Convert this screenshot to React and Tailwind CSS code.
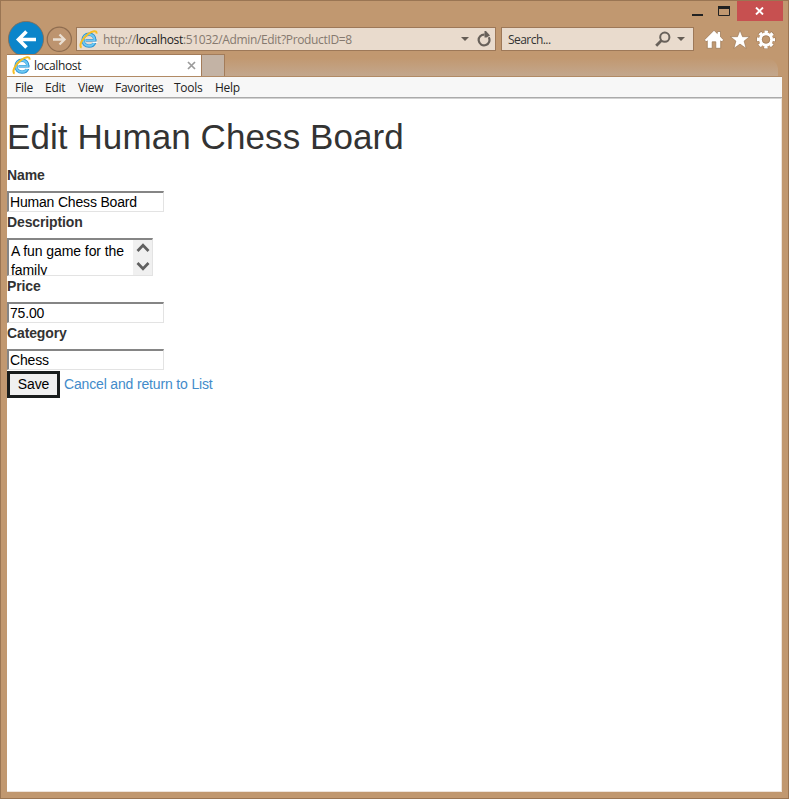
import React from "react";

const ui = "font-['Open_Sans','Noto_Sans',sans-serif]";

function BrowserLogo() {
  return (
    <svg width="19" height="19" viewBox="0 0 19 19" className="shrink-0" fill="none">
      <path d="M15.700 12.300C14.800 14.800 12.600 16.100 10 16.100C6.400 16.100 4 13.700 4 10.200C4 6.700 6.500 4.200 10 4.200C13.600 4.200 16 6.700 15.800 10.500" stroke="#2f93d2" strokeWidth="3.400" />
      <path d="M6.500 10.400H17.400" stroke="#2f93d2" strokeWidth="2.400" />
      <path d="M15.300 12.300C14.400 14.500 12.500 15.800 10 15.800C6.600 15.800 4.200 13.500 4.200 10.200C4.200 6.900 6.600 4.500 10 4.500C13.300 4.500 15.600 6.800 15.500 10.300" stroke="#6cc9f4" strokeWidth="2.100" />
      <path d="M6 10.400H16.400" stroke="#6cc9f4" strokeWidth="1.200" />
      <path d="M13.500 12.400H18.500" stroke="#fff" strokeWidth="1" />
      <path d="M2.600 17.600C-.6 16.100 3.200 8.300 8.800 4.200C13.200 1 18-.4 17.500 3.700" stroke="#f6bd22" strokeWidth="2" />
    </svg>
  );
}

function Caret() {
  return (
    <svg width="8" height="4" viewBox="0 0 8 4" className="shrink-0">
      <path d="M0 0h8L4 4z" fill="#655d55" />
    </svg>
  );
}

function TitleBar() {
  return (
    <div className="flex h-5 shrink-0 justify-end pr-[5px]">
      <svg width="40" height="20" viewBox="0 0 40 20" className="mr-[5px]">
        <path d="M0 13h11v2H0z" fill="#222" />
        <path d="M26.500 5.500h11v9h-11z" fill="none" stroke="#222" />
        <path d="M26 5h12v3H26z" fill="#222" />
      </svg>
      <div className="flex w-[46px] items-center justify-center bg-[#c75050]">
        <svg width="9" height="8" viewBox="0 0 9 8" className="mr-px">
          <path d="M1 .5l7 7M8 .5l-7 7" stroke="#fff" strokeWidth="1.900" />
        </svg>
      </div>
    </div>
  );
}

function NavBar() {
  return (
    <div className="flex h-[33px] shrink-0 items-start pl-[7px]">
      <svg width="37" height="37" viewBox="0 0 37 37" className="shrink-0">
        <circle cx="18" cy="18" r="17.600" fill="#0b85ca" stroke="#896b50" strokeWidth=".8" />
        <path d="M28 18.500H11M18.500 10.500l-8 8 8 8" fill="none" stroke="#fff" strokeWidth="3.600" />
      </svg>
      <svg width="26" height="26" viewBox="0 0 26 26" className="ml-px mt-[5px] shrink-0">
        <circle cx="13.300" cy="13.300" r="12.100" fill="#bd946f" stroke="#8f6d50" strokeWidth="1.200" />
        <path d="M7 13.500h11.500M13.500 8.500l5 5-5 5" fill="none" stroke="#eadfd3" strokeWidth="2.300" />
      </svg>
      <div className="ml-1 mt-[6px] flex h-6 w-[420px] shrink-0 items-center border border-[#9d7858] bg-[#e9dbcd] pl-[2px]">
        <BrowserLogo />
        <span className={`${ui} ml-[5px] w-[260px] whitespace-nowrap pt-[2px] text-[12px] leading-[20px] tracking-[-0.35px] text-[#85796f]`}>
          http://<span className="text-[#222]">localhost</span>:51032/Admin/Edit?ProductID=8
        </span>
        <div className="ml-auto mr-[4px] flex shrink-0 items-center gap-2">
          <Caret />
          <svg width="14" height="16" viewBox="0 0 14 16">
            <path d="M11.700 6.200A5.400 5.400 0 1 1 7.500 3.600" fill="none" stroke="#68615a" strokeWidth="2.200" />
            <path d="M7.500 0h1.500l4 4.500-3.500 2H7.500z" fill="#68615a" />
          </svg>
        </div>
      </div>
      <div className="ml-[5px] mt-[6px] flex h-6 w-[193px] shrink-0 items-center border border-[#9d7858] bg-[#e9dbcd] pl-[6px]">
        <span className={`${ui} pt-[2px] text-[12px] leading-[20px] tracking-[-0.55px] text-[#333]`}>Search...</span>
        <svg width="16" height="16" viewBox="0 0 16 16" className="ml-auto">
          <circle cx="9.800" cy="6.200" r="4.600" fill="none" stroke="#68615a" strokeWidth="2" />
          <path d="M6.400 9.600L1.200 14.800" stroke="#68615a" strokeWidth="2.800" />
        </svg>
        <div className="ml-[6px] mr-2"><Caret /></div>
      </div>
      <div className="ml-[10px] mt-[8px] flex shrink-0 gap-[6px]">
        <svg width="20" height="20" viewBox="0 0 20 20" stroke="#967250" strokeWidth=".7">
          <path d="M10 1.300l3.300 3.200V2.500h3.200v5.300l3.200 3.100-1.900 1.900-1.100-1V19.300h-4.900v-6.500H8.200v6.500H3.300v-7.500l-1.100 1L.4 10.900z" fill="#fff" />
        </svg>
        <svg width="20" height="20" viewBox="0 0 20 20" stroke="#967250" strokeWidth=".6">
          <path d="M10 1.300l2.500 6.400h7.100l-5.500 4.400 2 7.300-6.100-4.300-6.100 4.300 2-7.300L.4 7.700h7.100z" fill="#fff" />
        </svg>
        <svg width="20" height="20" viewBox="0 0 20 20" fill="none">
          <circle cx="10" cy="10.500" r="7.600" stroke="#967250" strokeWidth="4" strokeDasharray="4 1.970" strokeDashoffset="2" />
          <circle cx="10" cy="10.500" r="7.600" stroke="#fff" strokeWidth="3" strokeDasharray="3.400 2.570" strokeDashoffset="1.700" />
          <circle cx="10" cy="10.500" r="5.500" stroke="#fff" strokeWidth="3" />
          <circle cx="10" cy="10.500" r="3.800" stroke="#967250" strokeWidth=".6" />
        </svg>
      </div>
    </div>
  );
}

function TabStrip() {
  return (
    <div className="z-10 ml-[6px] mr-[6px] flex h-[22px] shrink-0">
      <div className="flex w-[195px] items-center border-t border-r border-[#a37c5a] bg-white pl-[5px]">
        <BrowserLogo />
        <span className={`${ui} ml-[3px] pt-px text-[12px] leading-5 tracking-[-0.35px] text-[#222]`}>localhost</span>
        <svg width="9" height="9" viewBox="0 0 9 9" className="ml-auto mr-[5px]">
          <path d="M1 1l7 7M8 1l-7 7" stroke="#9b9b9b" strokeWidth="1.700" />
        </svg>
      </div>
      <div className="w-[23px] border-t border-r border-[#a37c5a] bg-[#c3b3a5]" />
      <div className="mt-1 mr-1 flex-1 rounded-tr-xl bg-gradient-to-b from-[#c19870] to-[#c3a78d]" />
    </div>
  );
}

function MenuBar() {
  return (
    <div className={`${ui} ml-[6px] mr-[6px] flex h-[22px] shrink-0 items-center border-t border-b border-t-[#b18a65] border-b-[#aaa] bg-[#f7f7f7] pl-2 pt-px text-[12px] tracking-[-0.25px] text-[#222]`}>
      <span className="w-[30px]">File</span>
      <span className="w-[33px]">Edit</span>
      <span className="w-[37px]">View</span>
      <span className="w-[59px]">Favorites</span>
      <span className="w-[41px]">Tools</span>
      <span>Help</span>
    </div>
  );
}

const labelStyle = "text-[14px] font-bold leading-5 tracking-[-0.12px] text-[#333]";
const fieldStyle =
  "block w-[157px] h-[21px] border-2 border-t-[#858585] border-l-[#858585] border-r-[#e3e3e3] border-b-[#e3e3e3] border-r border-b bg-white px-px text-[14px] leading-[18px] tracking-[-0.18px] text-black outline-none";

function Field({ label, value }) {
  return (
    <div className="h-[47px]">
      <div className={labelStyle}>{label}</div>
      <input className={`${fieldStyle} mt-[6px]`} defaultValue={value} />
    </div>
  );
}

function EditPage() {
  return (
    <main className="ml-[6px] mr-[6px] h-[694px] shrink-0 overflow-hidden border-t border-r border-b border-[#eee4dc] border-t-[#d2d2d2] bg-white font-['Liberation_Sans',Arial,sans-serif]">
      <h1 className="mt-[18px] h-[48px] whitespace-nowrap text-[35px] leading-10 tracking-[0.09px] text-[#333]">Edit Human Chess Board</h1>
      <Field label="Name" value="Human Chess Board" />
      <div className="h-[64px]">
        <div className={labelStyle}>Description</div>
        <div className="mt-[6px] flex h-[38px] w-[146px] overflow-hidden border-2 border-r border-b border-t-[#858585] border-l-[#858585] border-r-[#e3e3e3] border-b-[#e3e3e3]">
          <div className="w-[124px] pl-[2px] pt-[2px] text-[14px] leading-[19px] tracking-[-0.08px] text-black">A fun game for the family</div>
          <div className="flex w-[19px] flex-col items-center justify-between bg-[#f0f0f0] pt-[3px] pb-[4px]">
            <svg width="14" height="9" viewBox="0 0 14 9"><path d="M1.500 8L7 2.300 12.500 8" fill="none" stroke="#606060" strokeWidth="2.700" /></svg>
            <svg width="14" height="9" viewBox="0 0 14 9"><path d="M1.500 1L7 6.700 12.500 1" fill="none" stroke="#606060" strokeWidth="2.700" /></svg>
          </div>
        </div>
      </div>
      <Field label="Price" value="75.00" />
      <Field label="Category" value="Chess" />
      <div className="flex items-start pt-px">
        <button className="h-[27px] w-[53px] border-[3px] border-[#191d1d] bg-[#f0f0f0] pb-px text-[14px] leading-5 tracking-[-0.1px] text-black">Save</button>
        <a className="ml-1 mt-[3px] text-[14px] leading-5 tracking-[-0.16px] text-[#428bca]">Cancel and return to List</a>
      </div>
    </main>
  );
}

export default function App() {
  return (
    <div className="flex h-[799px] w-[789px] flex-col overflow-hidden border border-[#9a7553] bg-[#c19870]">
      <TitleBar />
      <NavBar />
      <TabStrip />
      <MenuBar />
      <EditPage />
    </div>
  );
}
